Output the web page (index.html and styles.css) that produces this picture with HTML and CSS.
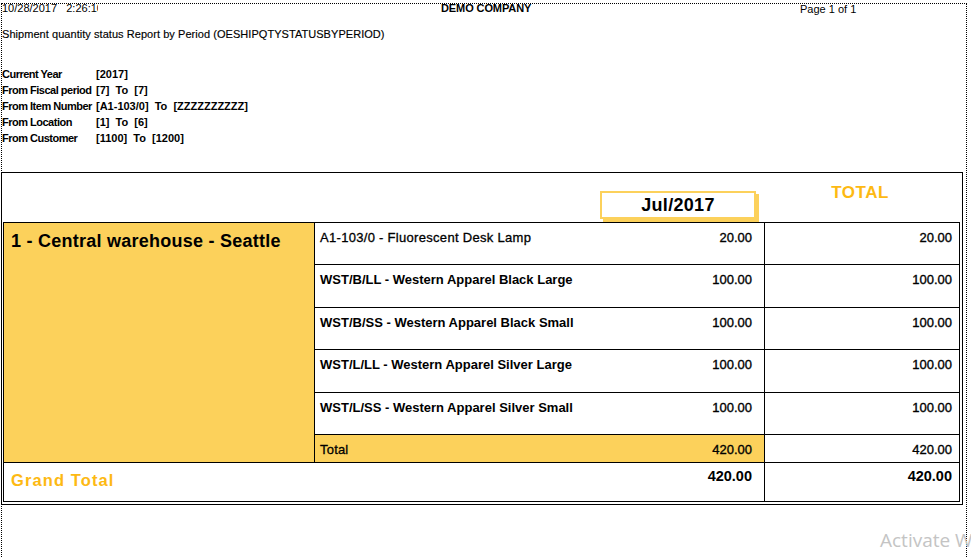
FILE: index.html
```html
<!DOCTYPE html>
<html>
<head>
<meta charset="utf-8">
<link rel="stylesheet" href="styles.css">
</head>
<body>
<div class="page">
  <div class="topbar">
    <div class="date">10/28/2017&nbsp;&nbsp;&nbsp;2:26:10 PM</div>
    <div class="company">DEMO COMPANY</div>
    <div class="pageno">Page 1 of 1</div>
  </div>
  <div class="title">Shipment quantity status Report by Period (OESHIPQTYSTATUSBYPERIOD)</div>
  <div class="params">
    <div class="lbl">Current Year</div><div class="val">[2017]</div>
    <div class="lbl">From Fiscal period</div><div class="val">[7]&nbsp; To&nbsp; [7]</div>
    <div class="lbl">From Item Number</div><div class="val">[A1-103/0]&nbsp; To&nbsp; [ZZZZZZZZZZ]</div>
    <div class="lbl">From Location</div><div class="val">[1]&nbsp; To&nbsp; [6]</div>
    <div class="lbl">From Customer</div><div class="val">[1100]&nbsp; To&nbsp; [1200]</div>
  </div>

  <div class="report">
    <div class="rhead">
      <div class="periodcol"><div class="period">Jul/2017</div></div>
      <div class="totalhead">TOTAL</div>
    </div>
    <div class="grid">
      <div class="grp">1 - Central warehouse - Seattle</div>

      <div class="item"><span class="desc reg">A1-103/0 - Fluorescent Desk Lamp</span><span class="qty">20.00</span></div>
      <div class="tot">20.00</div>

      <div class="item"><span class="desc">WST/B/LL - Western Apparel Black Large</span><span class="qty">100.00</span></div>
      <div class="tot">100.00</div>

      <div class="item"><span class="desc">WST/B/SS - Western Apparel Black Small</span><span class="qty">100.00</span></div>
      <div class="tot">100.00</div>

      <div class="item"><span class="desc">WST/L/LL - Western Apparel Silver Large</span><span class="qty">100.00</span></div>
      <div class="tot">100.00</div>

      <div class="item"><span class="desc">WST/L/SS - Western Apparel Silver Small</span><span class="qty">100.00</span></div>
      <div class="tot">100.00</div>

      <div class="item sub"><span class="desc reg">Total</span><span class="qty">420.00</span></div>
      <div class="tot">420.00</div>

      <div class="grand"><span class="gl">Grand Total</span><span class="gn">420.00</span></div>
      <div class="tot gtot"><span class="gn">420.00</span></div>
    </div>
  </div>
</div>
<div class="watermark">Activate Windows</div>
</body>
</html>
```
FILE: styles.css
```css
html, body {
  margin: 0;
  padding: 0;
  background: #fff;
  overflow: hidden;
  width: 971px;
  height: 557px;
}
body {
  font-family: "Liberation Sans", Arial, sans-serif;
  color: #000;
  position: relative;
}
.page {
  position: relative;
  padding-top: 2px;
  height: 555px;
  overflow: hidden;
}
.page::before {
  content: "";
  position: absolute;
  left: 1px;
  top: 3px;
  width: 966px;
  height: 560px;
  box-sizing: border-box;
  border: 1px dotted #000;
  border-bottom: none;
  pointer-events: none;
}
.topbar {
  display: grid;
  grid-template-columns: 439px 359px 1fr;
  padding-left: 2px;
  font-size: 11px;
  line-height: 12px;
  height: 12px;
}
.date {
  width: 96px;
  overflow: hidden;
  white-space: nowrap;
}
.company {
  font-weight: bold;
  letter-spacing: -0.1px;
  white-space: nowrap;
}
.pageno {
  padding-top: 1px;
  white-space: nowrap;
}
.title {
  margin-top: 14px;
  padding-left: 2px;
  font-size: 11px;
  line-height: 13px;
  letter-spacing: 0.05px;
  white-space: nowrap;
  -webkit-text-stroke: 0.15px #000;
}
.params {
  margin-top: 25px;
  padding-left: 2px;
  display: grid;
  grid-template-columns: 94px 1fr;
  font-size: 11px;
  font-weight: bold;
  line-height: 16px;
  white-space: nowrap;
}
.lbl {
  letter-spacing: -0.5px;
}
.val {
  letter-spacing: 0;
}
.report {
  margin-top: 26px;
  margin-left: 1px;
  width: 962px;
  box-sizing: border-box;
  border: 1px solid #000;
  padding: 0 2px 2px 1px;
}
.rhead {
  height: 49px;
  display: grid;
  grid-template-columns: 762px 1fr;
}
.periodcol {
  padding-left: 597px;
  padding-top: 18px;
}
.period {
  width: 156px;
  height: 28px;
  box-sizing: border-box;
  border: 2px solid #fcd15b;
  box-shadow: 3px 3px 0 #fcd15b;
  text-align: center;
  font-size: 18px;
  font-weight: bold;
  line-height: 24px;
  letter-spacing: 0.3px;
  background: #fff;
}
.totalhead {
  padding-top: 10px;
  padding-right: 5px;
  text-align: center;
  color: #fdb913;
  font-size: 17px;
  font-weight: bold;
  line-height: 20px;
  letter-spacing: 0.5px;
}
.grid {
  display: grid;
  background: #000;
  padding: 1px;
  gap: 1px;
  grid-template-columns: 310px 449px 194px;
  grid-template-rows: 41px 42px 41px 42px 41px 27px 38px;
  width: 957px;
  box-sizing: border-box;
}
.grid > div {
  background: #fff;
}
.grid > .grp {
  grid-column: 1;
  grid-row: 1 / 7;
  background: #fcd15b;
  padding: 8px 0 0 7px;
  font-size: 18px;
  font-weight: bold;
  line-height: 20px;
  letter-spacing: 0.25px;
  white-space: nowrap;
}
.item {
  grid-column: 2;
  display: flex;
  justify-content: space-between;
  align-items: flex-start;
  padding: 7px 12px 0 5px;
  font-size: 13px;
  line-height: 15px;
  white-space: nowrap;
}
.desc {
  font-weight: bold;
}
.desc.reg {
  font-weight: normal;
  letter-spacing: 0.3px;
  -webkit-text-stroke: 0.3px #000;
}
.qty, .tot {
  -webkit-text-stroke: 0.35px #000;
}
.grid > .sub {
  background: #fcd15b;
}
.sub .desc.reg {
  letter-spacing: 0.2px;
}
.tot {
  grid-column: 3;
  padding: 7px 7px 0 0;
  text-align: right;
  font-size: 13px;
  line-height: 15px;
}
.grand {
  grid-column: 1 / 3;
  display: flex;
  justify-content: space-between;
  align-items: flex-start;
  padding: 0 12px 0 7px;
}
.gl {
  margin-top: 8px;
  color: #fdb913;
  font-size: 16.5px;
  font-weight: bold;
  line-height: 19px;
  letter-spacing: 1.1px;
}
.gn {
  display: block;
  margin-top: 5px;
  font-size: 14.5px;
  font-weight: bold;
  line-height: 17px;
  -webkit-text-stroke: 0;
}
.tot.gtot {
  padding-top: 0;
  -webkit-text-stroke: 0;
}
.watermark {
  position: absolute;
  left: 880px;
  top: 531px;
  font-family: "Open Sans", "Noto Sans", sans-serif;
  font-size: 19px;
  line-height: 19px;
  color: #c4c4c4;
  white-space: nowrap;
}
```
